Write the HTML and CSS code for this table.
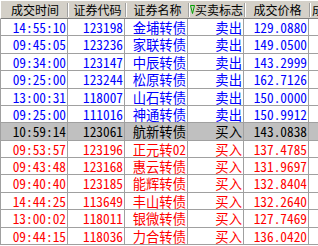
FILE: index.html
```html
<!DOCTYPE html>
<html lang="zh-CN">
<head>
<meta charset="utf-8">
<link rel="stylesheet" href="styles.css">
</head>
<body>
<div class="table">
  <div class="head">
    <div class="hc">成交时间</div>
    <div class="hc">证券代码</div>
    <div class="hc">证券名称</div>
    <div class="hc sorted"><svg class="tri" width="5" height="9" viewBox="0 0 5 9"><path d="M0.5 0.5 H4.5 L2.5 8.5 Z" fill="none" stroke="#00a000" stroke-width="1"/></svg>买卖标志</div>
    <div class="hc">成交价格</div>
    <div class="hc last">成交</div>
  </div>
  <div class="row sell"><div class="c">14:55:10</div><div class="c">123198</div><div class="c">金埔转债</div><div class="c">卖出</div><div class="c">129.0880</div><div class="c"></div></div>
  <div class="row sell"><div class="c">09:45:05</div><div class="c">123236</div><div class="c">家联转债</div><div class="c">卖出</div><div class="c">149.0500</div><div class="c"></div></div>
  <div class="row sell"><div class="c">09:34:00</div><div class="c">123147</div><div class="c">中辰转债</div><div class="c">卖出</div><div class="c">143.2999</div><div class="c"></div></div>
  <div class="row sell"><div class="c">09:25:00</div><div class="c">123244</div><div class="c">松原转债</div><div class="c">卖出</div><div class="c">162.7126</div><div class="c"></div></div>
  <div class="row sell"><div class="c">13:00:31</div><div class="c">118007</div><div class="c">山石转债</div><div class="c">卖出</div><div class="c">150.0000</div><div class="c"></div></div>
  <div class="row sell"><div class="c">09:25:00</div><div class="c">111016</div><div class="c">神通转债</div><div class="c">卖出</div><div class="c">150.9912</div><div class="c"></div></div>
  <div class="row selected"><div class="c">10:59:14</div><div class="c">123061</div><div class="c">航新转债</div><div class="c">买入</div><div class="c">143.0838</div><div class="c"></div></div>
  <div class="row buy"><div class="c">09:53:57</div><div class="c">123196</div><div class="c">正元转02</div><div class="c">买入</div><div class="c">137.4785</div><div class="c"></div></div>
  <div class="row buy"><div class="c">09:43:48</div><div class="c">123168</div><div class="c">惠云转债</div><div class="c">买入</div><div class="c">131.9697</div><div class="c"></div></div>
  <div class="row buy"><div class="c">09:40:40</div><div class="c">123185</div><div class="c">能辉转债</div><div class="c">买入</div><div class="c">132.8404</div><div class="c"></div></div>
  <div class="row buy"><div class="c">14:44:25</div><div class="c">113649</div><div class="c">丰山转债</div><div class="c">买入</div><div class="c">132.2640</div><div class="c"></div></div>
  <div class="row buy"><div class="c">13:00:02</div><div class="c">118011</div><div class="c">银微转债</div><div class="c">买入</div><div class="c">127.7469</div><div class="c"></div></div>
  <div class="row buy"><div class="c">09:44:15</div><div class="c">118036</div><div class="c">力合转债</div><div class="c">买入</div><div class="c">136.0420</div><div class="c"></div></div>
</div>
</body>
</html>
```

FILE: styles.css
```css
html, body {
  margin: 0;
  padding: 0;
  background: #ffffff;
  overflow: hidden;
}

.table {
  width: 318px;
  height: 246px;
  display: flex;
  flex-direction: column;
  overflow: hidden;
}

.head {
  flex: none;
  height: 19px;
  box-sizing: border-box;
  display: grid;
  grid-template-columns: 68px 57px 63px 56px 65px 1fr;
  background: #d4d0c8;
  border-top: 1px solid #ffffff;
  border-left: 1px solid #ffffff;
  border-bottom: 1px solid #808080;
  font: 12px "Noto Sans CJK SC", sans-serif;
  color: #000000;
}

.hc {
  position: relative;
  display: flex;
  align-items: center;
  justify-content: center;
  white-space: nowrap;
  padding-top: 1px;
  line-height: 14px;
}

.hc::after {
  content: "";
  position: absolute;
  right: 0;
  top: 2px;
  bottom: 1px;
  width: 1px;
  border-left: 1px solid #a0a0a0;
  background: #ffffff;
  box-sizing: content-box;
  margin-right: -1px;
}

.hc:first-child::after {
  right: 1px;
}

.hc.last {
  justify-content: flex-start;
  padding-left: 2px;
}

.hc.last::after {
  display: none;
}

.hc.sorted {
  justify-content: flex-start;
  padding-left: 1px;
}

.tri {
  flex: none;
  margin-top: -1px;
}

.row {
  flex: none;
  height: 17.38px;
  box-sizing: border-box;
  display: grid;
  grid-template-columns: 67px 57px 63px 56px 65px 1fr;
  border-left: 1px solid #a0a0a0;
  border-bottom: 1px solid #a0a0a0;
  font: 13.33px "Noto Sans CJK SC", sans-serif;
  font-feature-settings: "hwid";
}

.c {
  box-sizing: border-box;
  border-right: 1px solid #a0a0a0;
  text-align: right;
  padding-right: 1px;
  padding-top: 1px;
  white-space: nowrap;
  line-height: 15px;
}

.c:last-child {
  border-right: 0;
}

.sell {
  color: #0000ff;
}

.buy {
  color: #ff0000;
}

.selected {
  color: #000000;
  background: #c0c0c0;
}
```
